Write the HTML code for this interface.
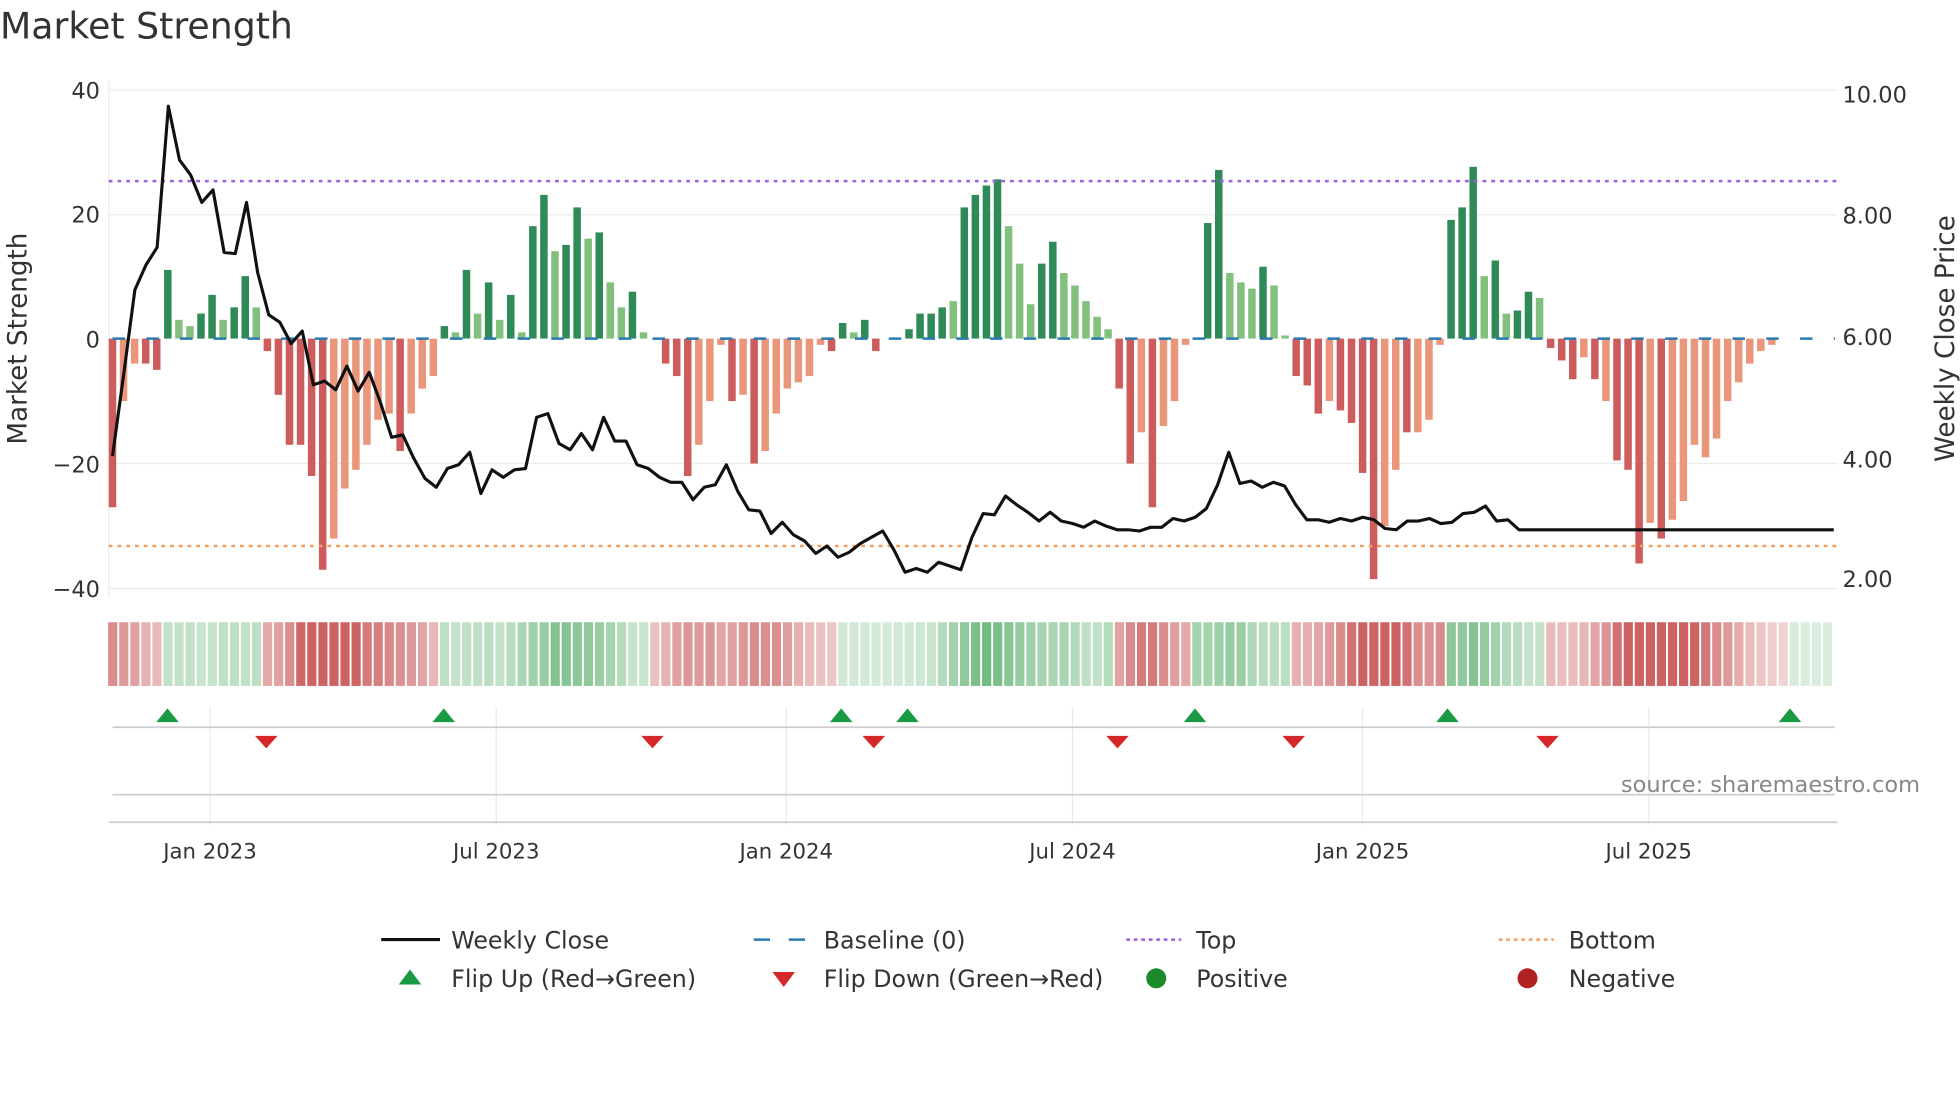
<!DOCTYPE html>
<html><head><meta charset="utf-8"><style>
html,body{margin:0;padding:0;background:#fff;}
svg{display:block;font-family:"DejaVu Sans","Liberation Sans",sans-serif;}
</style></head><body>
<svg id="s" width="1960" height="1102" viewBox="0 0 1568 882" preserveAspectRatio="none" xmlns="http://www.w3.org/2000/svg">
<rect width="1568" height="882" fill="#fff"/>
<text x="0" y="31" font-size="29" fill="#333">Market Strength</text>
<g stroke="#ececec" stroke-width="1">
<line x1="87" y1="72" x2="1470" y2="72"/><line x1="87" y1="172" x2="1470" y2="172"/>
<line x1="87" y1="371" x2="1470" y2="371"/><line x1="87" y1="471" x2="1470" y2="471"/>
<line x1="87" y1="65" x2="87" y2="478"/>
</g>
<g font-size="18" fill="#333" text-anchor="end">
<text x="80" y="79">40</text><text x="80" y="178">20</text><text x="80" y="278">0</text>
<text x="80" y="378">−20</text><text x="80" y="478">−40</text>
</g>
<g font-size="18" fill="#333">
<text x="1474" y="82">10.00</text><text x="1474" y="179">8.00</text><text x="1474" y="276">6.00</text>
<text x="1474" y="374">4.00</text><text x="1474" y="470">2.00</text>
</g>
<text transform="translate(21,271) rotate(-90)" font-size="21" fill="#333" text-anchor="middle">Market Strength</text>
<text transform="translate(1563,271) rotate(-90)" font-size="21" fill="#333" text-anchor="middle">Weekly Close Price</text>
<g id="bars"></g>
<line x1="87" y1="145" x2="1470" y2="145" stroke="#a05ee0" stroke-width="2" stroke-dasharray="3,4"/>
<line x1="87" y1="437" x2="1470" y2="437" stroke="#f0a060" stroke-width="2" stroke-dasharray="3,4"/>
<line x1="90" y1="271" x2="1468" y2="271" stroke="#2a7ab0" stroke-width="2" stroke-dasharray="10,17"/>
<polyline id="price" fill="none" stroke="#111" stroke-width="2.5" stroke-linejoin="round"/>
<g id="strip"></g>
<g stroke="#eaeaea" stroke-width="1">
<line x1="168" y1="566" x2="168" y2="660"/><line x1="397" y1="566" x2="397" y2="660"/>
<line x1="629" y1="566" x2="629" y2="660"/><line x1="858" y1="566" x2="858" y2="660"/>
<line x1="1090" y1="566" x2="1090" y2="660"/><line x1="1319" y1="566" x2="1319" y2="660"/>
</g>
<line x1="90" y1="582" x2="1468" y2="582" stroke="#d0d0d0" stroke-width="1.5"/>
<line x1="90" y1="636" x2="1468" y2="636" stroke="#d0d0d0" stroke-width="1.5"/>
<line x1="87" y1="658" x2="1470" y2="658" stroke="#d0d0d0" stroke-width="1.5"/>
<g id="marks"></g>
<text x="1536" y="634" font-size="18" fill="#888" text-anchor="end">source: sharemaestro.com</text>
<g font-size="17" fill="#333" text-anchor="middle">
<text x="168" y="687">Jan 2023</text><text x="397" y="687">Jul 2023</text><text x="629" y="687">Jan 2024</text>
<text x="858" y="687">Jul 2024</text><text x="1090" y="687">Jan 2025</text><text x="1319" y="687">Jul 2025</text>
</g>
<g font-size="19" fill="#333">
<line x1="305" y1="752" x2="352" y2="752" stroke="#111" stroke-width="2.5"/>
<text x="361" y="759">Weekly Close</text>
<line x1="603" y1="752" x2="647" y2="752" stroke="#2a7ab0" stroke-width="2" stroke-dasharray="13,15"/>
<text x="659" y="759">Baseline (0)</text>
<line x1="901" y1="752" x2="945" y2="752" stroke="#a05ee0" stroke-width="2" stroke-dasharray="3,3"/>
<text x="957" y="759">Top</text>
<line x1="1199" y1="752" x2="1243" y2="752" stroke="#f0a060" stroke-width="2" stroke-dasharray="3,3"/>
<text x="1255" y="759">Bottom</text>
<polygon points="319,788 328,776 337,788" fill="#1a9a44"/>
<text x="361" y="790">Flip Up (Red→Green)</text>
<polygon points="618,778 636,778 627,790" fill="#d62728"/>
<text x="659" y="790">Flip Down (Green→Red)</text>
<circle cx="925" cy="783" r="8" fill="#1a8a2a"/>
<text x="957" y="790">Positive</text>
<circle cx="1222" cy="783" r="8" fill="#b22222"/>
<text x="1255" y="790">Negative</text>
</g>
</svg>
<script>
var NS="http://www.w3.org/2000/svg";
function el(t,a,p){var e=document.createElementNS(NS,t);for(var k in a)e.setAttribute(k,a[k]);p.appendChild(e);return e;}
var B=[[-27,1],[-10,0],[-4,0],[-4,1],[-5,1],[11,1],[3,0],[2,0],[4,1],[7,1],[3,0],[5,1],[10,1],[5,0],[-2,1],[-9,1],[-17,1],[-17,1],[-22,1],[-37,1],[-32,0],[-24,0],[-21,0],[-17,0],[-13,0],[-12,0],[-18,1],[-12,0],[-8,0],[-6,0],
[2,1],[1,0],[11,1],[4,0],[9,1],[3,0],[7,1],[1,0],[18,1],[23,1],[14,0],[15,1],[21,1],[16,0],[17,1],[9,0],[5,0],[7.5,1],[1,0],[0,0],
[-4,1],[-6,1],[-22,1],[-17,0],[-10,0],[-1,0],[-10,1],[-9,0],[-20,1],[-18,0],[-12,0],[-8,0],[-7,0],[-6,0],[-1,0],[-2,1],[2.5,1],[1,0],[3,1],[-2,1],[0,0],[0,0],
[1.5,1],[4,1],[4,1],[5,1],[6,0],[21,1],[23,1],[24.5,1],[25.5,1],[18,0],[12,0],[5.5,0],[12,1],[15.5,1],[10.5,0],[8.5,0],[6,0],[3.5,0],[1.5,0],
[-8,1],[-20,1],[-15,0],[-27,1],[-14,0],[-10,0],[-1,0],[0,0],[18.5,1],[27,1],[10.5,0],[9,0],[8,0],[11.5,1],[8.5,0],[0.5,0],
[-6,1],[-7.5,1],[-12,1],[-10,0],[-11.5,1],[-13.5,1],[-21.5,1],[-38.5,1],[-30,0],[-21,0],[-15,1],[-15,0],[-13,0],[-1,0],
[19,1],[21,1],[27.5,1],[10,0],[12.5,1],[4,0],[4.5,1],[7.5,1],[6.5,0],
[-1.5,1],[-3.5,1],[-6.5,1],[-3,0],[-6.5,1],[-10,0],[-19.5,1],[-21,1],[-36,1],[-29.5,0],[-32,1],[-29,0],[-26,0],[-17,0],[-19,0],[-16,0],[-10,0],[-7,0],[-4,0],[-2,0],[-1,0]];
var N=157;while(B.length<N)B.push([0,0]);
var bars=document.getElementById('bars'),strip=document.getElementById('strip');
var dx=8.85;
// strip sign regions (x ranges green)
var G=[[130,209],[349,518],[668,890],[955,1030],[1155,1235],[1428,1475]];
function isG(x){for(var k=0;k<G.length;k++)if(x>=G[k][0]&&x<G[k][1])return true;return false;}
for(var i=0;i<N;i++){
 var v=B[i][0],d=B[i][1],x=90+i*dx;
 if(x>1468)break;
 if(v!=0){var col=v>0?(d?"#2e8b57":"#82c07e"):(d?"#cd5c5c":"#e9967a");
  var y0=271,y1=271-v*5;el('rect',{x:x-3,y:Math.min(y0,y1),width:6,height:Math.abs(v*5),fill:col},bars);}
 var s=0,n=0;for(var j=Math.max(0,i-2);j<=Math.min(N-1,i+2);j++){s+=Math.abs(B[j][0]);n++;}s/=n;
 var a=Math.min(1,s/22)*0.7+0.25;
 var c=isG(x)?"rgba(70,165,90,"+(a*0.8).toFixed(2)+")":"rgba(195,70,70,"+(a*0.9).toFixed(2)+")";
 el('rect',{x:x-3.5,y:498,width:dx-1.5,height:51,fill:c},strip);
}
var P=[365,300,232,212,198,85,128,140,162,152,202,203,162,218,252,258,275,265,308,305,312,293,313,298,322,350,348,367,383,390,375,372,362,395,376,382,376,375,334,331,355,360,347,360,334,353,353,372,375,382,386,386,400,390,388,372,393,408,409,427,418,428,433,443,437,446,442,435,430,425,440,458,455,458,450,453,456,430,411,412,397,404,410,417,410,417,419,422,417,421,424,424,425,422,422,415,417,414,407,388,362,387,385,390,386,389,404,416,416,418,415,417,414,416,423,424,417,417,415,419,418,411,410,405,417,416,424];
var pdx=8.93,pts=[];for(var i=0;i<P.length;i++)pts.push((90+i*pdx).toFixed(1)+","+P[i]);
pts.push("1467,424");document.getElementById('price').setAttribute('points',pts.join(' '));
var m=document.getElementById('marks');
[134,355,673,726,956,1158,1432].forEach(function(x){el('polygon',{points:(x-9)+",578 "+x+",567 "+(x+9)+",578",fill:"#1a9a44"},m);});
[213,522,699,894,1035,1238].forEach(function(x){el('polygon',{points:(x-9)+",589 "+(x+9)+",589 "+x+",599",fill:"#d62728"},m);});
</script>
</body></html>
